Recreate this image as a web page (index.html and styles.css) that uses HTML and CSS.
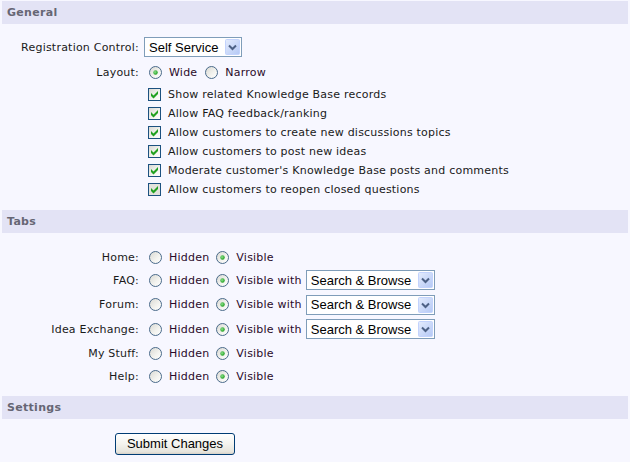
FILE: index.html
```html
<!DOCTYPE html>
<html>
<head>
<meta charset="utf-8">
<link rel="stylesheet" href="styles.css">
</head>
<body>
<svg class="defs" width="0" height="0" aria-hidden="true">
  <defs>
    <linearGradient id="boxfill" x1="0" y1="0" x2="1" y2="1">
      <stop offset="0" stop-color="#D8D8D2"/>
      <stop offset="0.6" stop-color="#F4F4F0"/>
      <stop offset="1" stop-color="#FFFFFF"/>
    </linearGradient>
    <radialGradient id="dot" cx="0.4" cy="0.4" r="0.6">
      <stop offset="0" stop-color="#8DE08D"/>
      <stop offset="1" stop-color="#21A121"/>
    </radialGradient>
    <linearGradient id="btnfill" x1="0" y1="0" x2="1" y2="1">
      <stop offset="0" stop-color="#E4ECFD"/>
      <stop offset="1" stop-color="#B4C8F5"/>
    </linearGradient>
  </defs>
</svg>
<div class="page">
  <div class="head">General</div>
  <div class="sect sect-general">
    <div class="row row-reg">
      <div class="lbl">Registration Control:</div>
      <div class="val">
        <span class="select sel-self"><span class="sel-text">Self Service</span><svg class="drop" width="15" height="16" viewBox="0 0 15 16"><rect x="0.5" y="0.5" width="14" height="15" rx="1" fill="url(#btnfill)" stroke="#C3D3FD"/><path d="M4 6.5 L7.5 10 L11 6.5" fill="none" stroke="#4D6185" stroke-width="2"/></svg></span>
      </div>
    </div>
    <div class="row row-layout">
      <div class="lbl">Layout:</div>
      <div class="val">
        <span class="opt"><svg class="radio" width="13" height="13" viewBox="0 0 13 13"><circle cx="6.5" cy="6.5" r="6" fill="url(#boxfill)" stroke="#4A6A8A"/><circle cx="6.5" cy="6.5" r="2.2" fill="url(#dot)"/></svg><span class="optl">Wide</span></span>
        <span class="opt opt-narrow"><svg class="radio" width="13" height="13" viewBox="0 0 13 13"><circle cx="6.5" cy="6.5" r="6" fill="url(#boxfill)" stroke="#4A6A8A"/></svg><span class="optl">Narrow</span></span>
      </div>
    </div>
    <div class="row row-cb">
      <div class="lbl"></div>
      <div class="val"><svg class="check" width="13" height="13" viewBox="0 0 13 13"><rect x="0.5" y="0.5" width="12" height="12" fill="url(#boxfill)" stroke="#1C5180"/><polygon points="3,5 5.5,7.5 10,3 10,6 5.5,10.5 3,8" fill="#21A121"/></svg><span>Show related Knowledge Base records</span></div>
    </div>
    <div class="row row-cb">
      <div class="lbl"></div>
      <div class="val"><svg class="check" width="13" height="13" viewBox="0 0 13 13"><rect x="0.5" y="0.5" width="12" height="12" fill="url(#boxfill)" stroke="#1C5180"/><polygon points="3,5 5.5,7.5 10,3 10,6 5.5,10.5 3,8" fill="#21A121"/></svg><span>Allow FAQ feedback/ranking</span></div>
    </div>
    <div class="row row-cb">
      <div class="lbl"></div>
      <div class="val"><svg class="check" width="13" height="13" viewBox="0 0 13 13"><rect x="0.5" y="0.5" width="12" height="12" fill="url(#boxfill)" stroke="#1C5180"/><polygon points="3,5 5.5,7.5 10,3 10,6 5.5,10.5 3,8" fill="#21A121"/></svg><span>Allow customers to create new discussions topics</span></div>
    </div>
    <div class="row row-cb">
      <div class="lbl"></div>
      <div class="val"><svg class="check" width="13" height="13" viewBox="0 0 13 13"><rect x="0.5" y="0.5" width="12" height="12" fill="url(#boxfill)" stroke="#1C5180"/><polygon points="3,5 5.5,7.5 10,3 10,6 5.5,10.5 3,8" fill="#21A121"/></svg><span>Allow customers to post new ideas</span></div>
    </div>
    <div class="row row-cb">
      <div class="lbl"></div>
      <div class="val"><svg class="check" width="13" height="13" viewBox="0 0 13 13"><rect x="0.5" y="0.5" width="12" height="12" fill="url(#boxfill)" stroke="#1C5180"/><polygon points="3,5 5.5,7.5 10,3 10,6 5.5,10.5 3,8" fill="#21A121"/></svg><span>Moderate customer's Knowledge Base posts and comments</span></div>
    </div>
    <div class="row row-cb">
      <div class="lbl"></div>
      <div class="val"><svg class="check" width="13" height="13" viewBox="0 0 13 13"><rect x="0.5" y="0.5" width="12" height="12" fill="#E2E2DC" stroke="#1C5180"/><polygon points="3,5 5.5,7.5 10,3 10,6 5.5,10.5 3,8" fill="#21A121"/></svg><span>Allow customers to reopen closed questions</span></div>
    </div>
  </div>

  <div class="head">Tabs</div>
  <div class="sect sect-tabs">
    <div class="row row-plain">
      <div class="lbl">Home:</div>
      <div class="val">
        <span class="opt"><svg class="radio" width="13" height="13" viewBox="0 0 13 13"><circle cx="6.5" cy="6.5" r="6" fill="url(#boxfill)" stroke="#4A6A8A"/></svg><span class="optl">Hidden</span></span>
        <span class="opt opt-vis"><svg class="radio" width="13" height="13" viewBox="0 0 13 13"><circle cx="6.5" cy="6.5" r="6" fill="url(#boxfill)" stroke="#4A6A8A"/><circle cx="6.5" cy="6.5" r="2.2" fill="url(#dot)"/></svg><span class="optl">Visible</span></span>
      </div>
    </div>
    <div class="row row-sel">
      <div class="lbl">FAQ:</div>
      <div class="val">
        <span class="opt"><svg class="radio" width="13" height="13" viewBox="0 0 13 13"><circle cx="6.5" cy="6.5" r="6" fill="url(#boxfill)" stroke="#4A6A8A"/></svg><span class="optl">Hidden</span></span>
        <span class="opt opt-vis"><svg class="radio" width="13" height="13" viewBox="0 0 13 13"><circle cx="6.5" cy="6.5" r="6" fill="url(#boxfill)" stroke="#4A6A8A"/><circle cx="6.5" cy="6.5" r="2.2" fill="url(#dot)"/></svg><span class="optl">Visible with</span></span>
        <span class="select sel-mode"><span class="sel-text">Search &amp; Browse</span><svg class="drop" width="15" height="16" viewBox="0 0 15 16"><rect x="0.5" y="0.5" width="14" height="15" rx="1" fill="url(#btnfill)" stroke="#C3D3FD"/><path d="M4 6.5 L7.5 10 L11 6.5" fill="none" stroke="#4D6185" stroke-width="2"/></svg></span>
      </div>
    </div>
    <div class="row row-sel">
      <div class="lbl">Forum:</div>
      <div class="val">
        <span class="opt"><svg class="radio" width="13" height="13" viewBox="0 0 13 13"><circle cx="6.5" cy="6.5" r="6" fill="url(#boxfill)" stroke="#4A6A8A"/></svg><span class="optl">Hidden</span></span>
        <span class="opt opt-vis"><svg class="radio" width="13" height="13" viewBox="0 0 13 13"><circle cx="6.5" cy="6.5" r="6" fill="url(#boxfill)" stroke="#4A6A8A"/><circle cx="6.5" cy="6.5" r="2.2" fill="url(#dot)"/></svg><span class="optl">Visible with</span></span>
        <span class="select sel-mode"><span class="sel-text">Search &amp; Browse</span><svg class="drop" width="15" height="16" viewBox="0 0 15 16"><rect x="0.5" y="0.5" width="14" height="15" rx="1" fill="url(#btnfill)" stroke="#C3D3FD"/><path d="M4 6.5 L7.5 10 L11 6.5" fill="none" stroke="#4D6185" stroke-width="2"/></svg></span>
      </div>
    </div>
    <div class="row row-sel">
      <div class="lbl">Idea Exchange:</div>
      <div class="val">
        <span class="opt"><svg class="radio" width="13" height="13" viewBox="0 0 13 13"><circle cx="6.5" cy="6.5" r="6" fill="url(#boxfill)" stroke="#4A6A8A"/></svg><span class="optl">Hidden</span></span>
        <span class="opt opt-vis"><svg class="radio" width="13" height="13" viewBox="0 0 13 13"><circle cx="6.5" cy="6.5" r="6" fill="url(#boxfill)" stroke="#4A6A8A"/><circle cx="6.5" cy="6.5" r="2.2" fill="url(#dot)"/></svg><span class="optl">Visible with</span></span>
        <span class="select sel-mode"><span class="sel-text">Search &amp; Browse</span><svg class="drop" width="15" height="16" viewBox="0 0 15 16"><rect x="0.5" y="0.5" width="14" height="15" rx="1" fill="url(#btnfill)" stroke="#C3D3FD"/><path d="M4 6.5 L7.5 10 L11 6.5" fill="none" stroke="#4D6185" stroke-width="2"/></svg></span>
      </div>
    </div>
    <div class="row row-plain row-stuff">
      <div class="lbl">My Stuff:</div>
      <div class="val">
        <span class="opt"><svg class="radio" width="13" height="13" viewBox="0 0 13 13"><circle cx="6.5" cy="6.5" r="6" fill="url(#boxfill)" stroke="#4A6A8A"/></svg><span class="optl">Hidden</span></span>
        <span class="opt opt-vis"><svg class="radio" width="13" height="13" viewBox="0 0 13 13"><circle cx="6.5" cy="6.5" r="6" fill="url(#boxfill)" stroke="#4A6A8A"/><circle cx="6.5" cy="6.5" r="2.2" fill="url(#dot)"/></svg><span class="optl">Visible</span></span>
      </div>
    </div>
    <div class="row row-plain">
      <div class="lbl">Help:</div>
      <div class="val">
        <span class="opt"><svg class="radio" width="13" height="13" viewBox="0 0 13 13"><circle cx="6.5" cy="6.5" r="6" fill="url(#boxfill)" stroke="#4A6A8A"/></svg><span class="optl">Hidden</span></span>
        <span class="opt opt-vis"><svg class="radio" width="13" height="13" viewBox="0 0 13 13"><circle cx="6.5" cy="6.5" r="6" fill="url(#boxfill)" stroke="#4A6A8A"/><circle cx="6.5" cy="6.5" r="2.2" fill="url(#dot)"/></svg><span class="optl">Visible</span></span>
      </div>
    </div>
  </div>

  <div class="head">Settings</div>
  <div class="sect sect-settings">
    <button class="submit" type="button">Submit Changes</button>
  </div>
</div>
</body>
</html>
```

FILE: styles.css
```css
html, body {
  margin: 0;
  padding: 0;
  background: #F7F7FF;
}
body {
  font-family: "DejaVu Sans", Verdana, sans-serif;
  font-size: 11px;
  letter-spacing: 0.22px;
  color: #1a1a1a;
}
.defs {
  display: block;
  width: 0;
  height: 0;
  overflow: hidden;
}
.page {
  padding: 1px 2px 0 2px;
}
.head {
  height: 23px;
  line-height: 23px;
  background: #E3E3F5;
  color: #666674;
  font-weight: bold;
  font-size: 11px;
  letter-spacing: 0.3px;
  padding-left: 5px;
}
.sect-general {
  padding: 10px 0 11px 0;
}
.sect-tabs {
  padding: 13px 0 8px 0;
}
.sect-settings {
  padding: 14px 0 7px 113px;
}
.row {
  display: grid;
  grid-template-columns: 137px 1fr;
  column-gap: 5px;
  align-items: center;
}
.row-reg { height: 26px; }
.row-layout { height: 25px; }
.row-cb { height: 19px; }
.row-plain { height: 22px; }
.row-sel { height: 24.5px; }
.row-stuff { height: 24px; }
.lbl {
  text-align: right;
  white-space: nowrap;
}
.val {
  display: flex;
  align-items: center;
  white-space: nowrap;
}
.opt {
  display: inline-flex;
  align-items: center;
}
.radio {
  display: block;
  margin: 0 7px 0 5px;
}
.optl {
  color: #2a0a2a;
}
.opt-narrow { margin-left: 3px; }
.opt-vis { margin-left: 2px; }
.check {
  display: block;
  margin: 0 7px 0 4px;
}
.select {
  display: inline-flex;
  align-items: center;
  justify-content: space-between;
  box-sizing: border-box;
  height: 20px;
  border: 1px solid #7F9DB9;
  background: #FFFFFF;
  padding: 1px;
  font-family: "Liberation Sans", Arial, sans-serif;
  font-size: 13px;
  letter-spacing: 0;
  color: #000;
}
.sel-self { width: 98px; }
.sel-mode {
  width: 129px;
  margin-left: 4px;
}
.sel-text {
  padding-left: 3px;
}
.drop {
  display: block;
}
.submit {
  box-sizing: border-box;
  width: 120px;
  height: 22px;
  padding: 0;
  border: 1px solid #003C74;
  border-radius: 3px;
  background: linear-gradient(#FFFFFF 0%, #F4F3EE 50%, #E6E4DC 90%, #D6D0C5 100%);
  font-family: "Liberation Sans", Arial, sans-serif;
  font-size: 13px;
  letter-spacing: 0;
  color: #000;
}
```
